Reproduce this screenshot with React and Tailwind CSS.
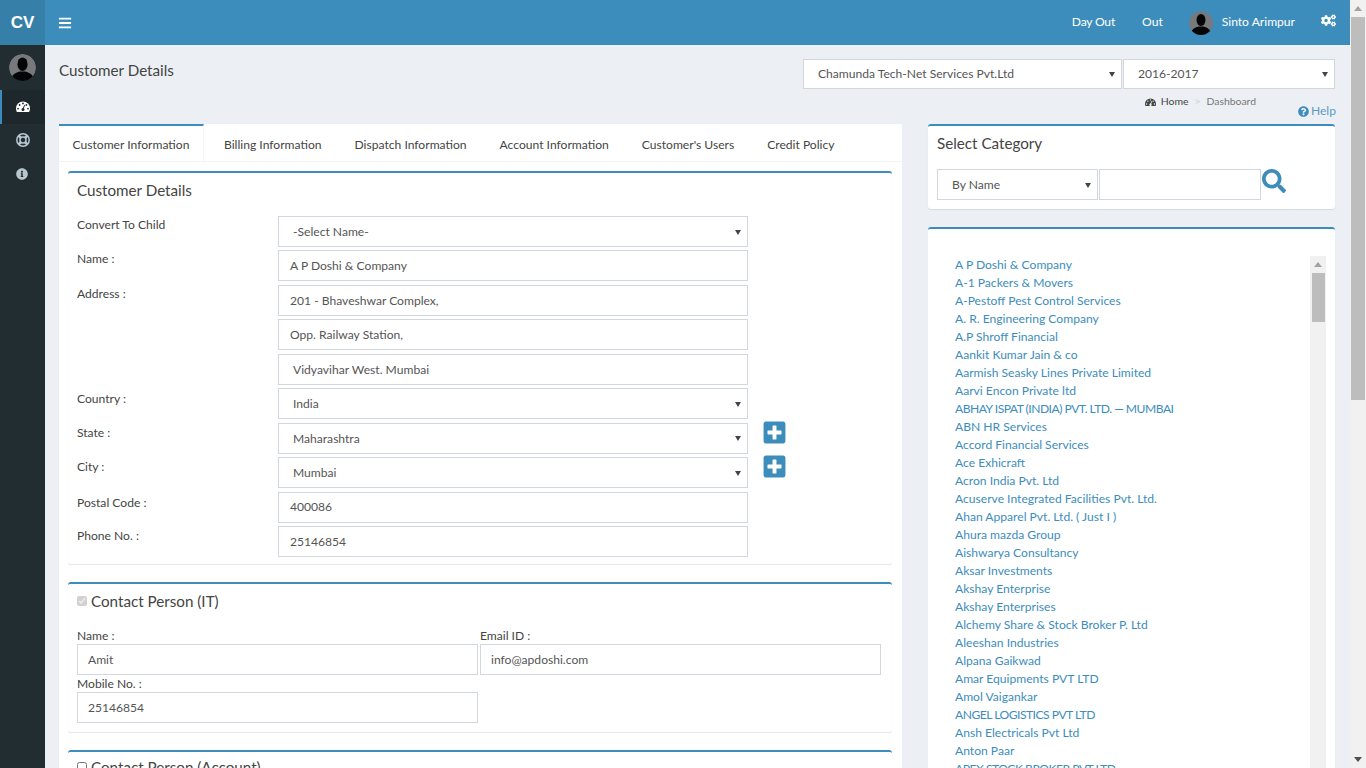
import { FaBars, FaInfoCircle, FaCogs, FaQuestionCircle, FaSearch, FaPlusSquare } from 'react-icons/fa';

const customers = [
  'A P Doshi & Company', 'A-1 Packers & Movers', 'A-Pestoff Pest Control Services', 'A. R. Engineering Company',
  'A.P Shroff Financial', 'Aankit Kumar Jain & co', 'Aarmish Seasky Lines Private Limited', 'Aarvi Encon Private ltd',
  'ABHAY ISPAT (INDIA) PVT. LTD. — MUMBAI', 'ABN HR Services', 'Accord Financial Services', 'Ace Exhicraft',
  'Acron India Pvt. Ltd', 'Acuserve Integrated Facilities Pvt. Ltd.', 'Ahan Apparel Pvt. Ltd. ( Just I )', 'Ahura mazda Group',
  'Aishwarya Consultancy', 'Aksar Investments', 'Akshay Enterprise', 'Akshay Enterprises',
  'Alchemy Share & Stock Broker P. Ltd', 'Aleeshan Industries', 'Alpana Gaikwad', 'Amar Equipments PVT LTD',
  'Amol Vaigankar', 'ANGEL LOGISTICS PVT LTD', 'Ansh Electricals Pvt Ltd', 'Anton Paar', 'APEX STOCK BROKER PVT LTD',
];

const tabs = ['Billing Information', 'Dispatch Information', 'Account Information', "Customer's Users", 'Credit Policy'];

function Avatar({ size }) {
  return (
    <svg width={size} height={size} viewBox="0 0 40 40" className="shrink-0 rounded-full">
      <circle cx="20" cy="20" r="20" fill="#77797c" />
      <ellipse cx="20" cy="15" rx="7.5" ry="10" fill="#050505" />
      <path d="M3 40c0-9 6-12 13-14h8c7 2 13 5 13 14z" fill="#050505" />
    </svg>
  );
}

function Gauge({ width, dots }) {
  return (
    <svg width={width} viewBox="0 0 14 11" fill="currentColor">
      <path d="M0 7.5a7 7 0 1 1 14 0c0 1.3-.3 2.5-.9 3.5H.9C.3 10 0 8.8 0 7.5z" />
      <g fill={dots}>
        <circle cx="2" cy="7.6" r="0.9" />
        <circle cx="3.6" cy="4" r="0.9" />
        <circle cx="7" cy="2.4" r="0.9" />
        <circle cx="10.4" cy="4" r="0.9" />
        <circle cx="12" cy="7.6" r="0.9" />
        <circle cx="7" cy="8.6" r="1.5" />
      </g>
      <path d="M6.4 8.4 8.2 3.8l.8.3-1.6 4.7z" fill={dots} />
    </svg>
  );
}

function LifeRing() {
  return (
    <svg width="14" height="14" viewBox="0 0 14 14" fill="none" stroke="currentColor">
      <circle cx="7" cy="7" r="6.2" strokeWidth="1.5" />
      <circle cx="7" cy="7" r="3" strokeWidth="1.5" />
      <path d="M2.6 2.6 4.9 4.9M11.4 2.6 9.1 4.9M2.6 11.4 4.9 9.1M11.4 11.4 9.1 9.1" strokeWidth="2.6" />
    </svg>
  );
}

function Field({ value, className = 'px-[11px]' }) {
  return (
    <div className={`flex h-[31px] items-center border border-[#d2d6de] bg-white pt-px text-[12.1px] text-[#555] ${className}`}>
      {value}
    </div>
  );
}

function Select({ value, className = 'h-[31px] pt-px' }) {
  return (
    <div className={`flex items-center justify-between border border-[#d2d6de] bg-white pl-[14px] pr-[6px] text-[12.1px] text-[#555] ${className}`}>
      <span>{value}</span>
      <span className="h-0 w-0 border-x-[3px] border-t-[5px] border-x-transparent border-t-[#444]" />
    </div>
  );
}

function Row({ label, children, labelClass = '' }) {
  return (
    <div className="flex">
      <div className={`w-[201px] shrink-0 text-[12.1px] leading-[18px] text-[#444] ${labelClass}`}>{label}</div>
      <div className="w-[470px]">{children}</div>
    </div>
  );
}

function ScrollUp() {
  return <div className="h-0 w-0 border-x-[4px] border-b-[5px] border-x-transparent border-b-[#a3a3a3]" />;
}

export default function App() {
  return (
    <div className="flex h-[768px] w-[1366px] overflow-hidden bg-[#ecf0f5] font-['Lato',sans-serif] text-[#444]">
      <div className="flex min-w-0 flex-1 flex-col">
        <header className="flex h-[45px] shrink-0 items-center bg-[#3c8dbc] text-white">
          <div className="flex h-full w-[45px] items-center justify-center bg-[#367fa9] font-['Liberation_Sans',sans-serif] text-[17px] font-bold">CV</div>
          <FaBars size={14} className="ml-[13px]" />
          <div className="ml-auto flex h-full items-center text-[12.1px]">
            <span className="mr-[27px] tracking-[-0.2px]">Day Out</span>
            <span className="mr-[26px]">Out</span>
            <Avatar size={24} />
            <span className="ml-[9px] mr-[26px]">Sinto Arimpur</span>
            <FaCogs size={15} className="mb-[5px] mr-[14px]" />
          </div>
        </header>

        <div className="flex min-h-0 flex-1">
          <aside className="flex w-[45px] shrink-0 flex-col bg-[#222d32]">
            <div className="flex h-[45px] items-center justify-center">
              <Avatar size={27} />
            </div>
            <div className="flex h-[34px] items-center justify-center border-l-2 border-[#3c8dbc] bg-[#1e282c] pb-[2px] pr-[2px] text-white">
              <Gauge width={14} dots="#1e282c" />
            </div>
            <div className="flex h-[33px] items-center justify-center pb-[2px] text-[#b8c7ce]">
              <LifeRing />
            </div>
            <div className="flex h-[33px] items-center justify-center pr-px text-[#b8c7ce]">
              <FaInfoCircle size={12} />
            </div>
          </aside>

          <main className="min-w-0 flex-1 overflow-hidden pl-[14px] pr-[15px]">
            <div className="flex h-[79px] items-start justify-between pt-[14px]">
              <h1 className="text-[15.2px] leading-[22px] text-[#444]">Customer Details</h1>
              <div className="flex flex-col items-end">
                <div className="flex gap-px">
                  <Select value="Chamunda Tech-Net Services Pvt.Ltd" className="h-[30px] w-[319px]" />
                  <Select value="2016-2017" className="h-[30px] w-[212px]" />
                </div>
                <div className="mr-[79px] mt-[7px] flex h-[12px] items-center text-[10.4px] text-[#444]">
                  <Gauge width={11} dots="#ecf0f5" />
                  <span className="ml-[5px]">Home</span>
                  <span className="mx-[6px] text-[#ccc]">&gt;</span>
                  <span className="text-[#777]">Dashboard</span>
                </div>
                <div className="-mr-px -mt-[3px] flex h-[12px] items-center text-[12.1px] text-[#5b9bc4]">
                  <FaQuestionCircle size={11} className="mr-[2px] text-[#3c8dbc]" />
                  Help
                </div>
              </div>
            </div>

            <div className="flex gap-[26px]">
              <div className="w-[843px] shrink-0">
                <div className="bg-white">
                  <div className="flex h-[38px] items-stretch border-b border-[#f4f4f4] text-[12.1px]">
                    <div className="flex w-[145px] items-center justify-center border-r border-t-[2px] border-r-[#f4f4f4] border-t-[#3c8dbc] pt-[3px] text-[#444]">Customer Information</div>
                    <div className="ml-[3.5px] flex">
                      {tabs.map((t) => (
                        <div key={t} className="flex items-center px-[16.5px] pt-[6px] text-[#444]">{t}</div>
                      ))}
                    </div>
                  </div>
                  <div className="pl-[9px] pr-[10px] pt-[9px]">
                    <section className="h-[393px] rounded-[3px] border-t-[2px] border-[#3c8dbc] bg-white px-[9px] shadow-[0_1px_1px_rgba(0,0,0,0.1)]">
                      <h2 className="pt-[6px] text-[15.2px] leading-[22px] text-[#444]">Customer Details</h2>
                      <div className="mt-[15px] flex flex-col gap-[3.45px]">
                        <Row label="Convert To Child"><Select value="-Select Name-" /></Row>
                        <Row label="Name :"><Field value="A P Doshi & Company" /></Row>
                        <Row label="Address :"><Field value="201 - Bhaveshwar Complex," /></Row>
                        <Row label=""><Field value="Opp. Railway Station," /></Row>
                        <Row label=""><Field value="Vidyavihar West. Mumbai" className="pl-[14px]" /></Row>
                        <Row label="Country :" labelClass="pt-[2px]"><Select value="India" /></Row>
                        <Row label="State :" labelClass="pt-px">
                          <div className="relative">
                            <Select value="Maharashtra" />
                            <FaPlusSquare size={25} className="absolute -right-[39px] top-[-3px] text-[#3c8dbc]" />
                          </div>
                        </Row>
                        <Row label="City :" labelClass="pt-px">
                          <div className="relative">
                            <Select value="Mumbai" />
                            <FaPlusSquare size={25} className="absolute -right-[39px] top-[-3px] text-[#3c8dbc]" />
                          </div>
                        </Row>
                        <Row label="Postal Code :" labelClass="pt-[2px]"><Field value="400086" /></Row>
                        <Row label="Phone No. :" labelClass="pt-px"><Field value="25146854" /></Row>
                      </div>
                    </section>

                    <section className="mt-[18px] h-[150px] rounded-[3px] border-t-[2px] border-[#3c8dbc] bg-white px-[9px] shadow-[0_1px_1px_rgba(0,0,0,0.1)]">
                      <label className="flex items-center pt-[6px] text-[15.2px] leading-[22px] text-[#444]">
                        <input type="checkbox" checked disabled readOnly className="mr-[4px] h-[10px] w-[10px]" />
                        Contact Person (IT)
                      </label>
                      <div className="mt-[17px] grid grid-cols-[401px_401px] gap-x-[2px] text-[12.1px] leading-[14px]">
                        <div>
                          <div className="mb-px">Name :</div>
                          <Field value="Amit" className="px-[10px]" />
                        </div>
                        <div>
                          <div className="mb-px">Email ID :</div>
                          <Field value="info@apdoshi.com" className="px-[10px]" />
                        </div>
                        <div className="mt-[2px]">
                          <div className="mb-px">Mobile No. :</div>
                          <Field value="25146854" className="px-[10px]" />
                        </div>
                      </div>
                    </section>

                    <section className="mt-[18px] rounded-[3px] border-t-[2px] border-[#3c8dbc] bg-white px-[9px] pb-4">
                      <label className="flex items-center pt-[4px] text-[15.2px] leading-[22px] text-[#444]">
                        <input type="checkbox" className="mr-[4px] h-[10px] w-[10px]" />
                        Contact Person (Account)
                      </label>
                    </section>
                  </div>
                </div>
              </div>

              <div className="w-[407px] shrink-0">
                <section className="h-[85px] rounded-[3px] border-t-[2px] border-[#3c8dbc] bg-white px-[9px] shadow-[0_1px_1px_rgba(0,0,0,0.1)]">
                  <h2 className="pt-[6px] text-[15.2px] leading-[22px] text-[#444]">Select Category</h2>
                  <div className="mt-[15px] flex items-start">
                    <Select value="By Name" className="h-[31px] w-[161px] pt-px" />
                    <div className="ml-px h-[31px] w-[162px] border border-[#d2d6de]" />
                    <FaSearch size={24} className="ml-px text-[#3c8dbc]" />
                  </div>
                </section>
                <section className="mt-[18px] h-[600px] rounded-[3px] border-t-[2px] border-[#3c8dbc] bg-white pl-[27px] pr-[9px] pt-[27px]">
                  <div className="flex justify-between">
                    <ul className="text-[12.1px] leading-[18px] text-[#3c8dbc]">
                      {customers.map((c) => (
                        <li key={c} className={c === c.toUpperCase() ? 'whitespace-nowrap tracking-[-0.5px]' : 'whitespace-nowrap'}>{c}</li>
                      ))}
                    </ul>
                    <div className="flex h-[600px] w-[16px] flex-col items-center bg-[#f1f1f1] pt-[6px]">
                      <ScrollUp />
                      <div className="mt-[6px] h-[49px] w-[13px] bg-[#bdbdbd]" />
                    </div>
                  </div>
                </section>
              </div>
            </div>
          </main>
        </div>
      </div>

      <div className="flex w-[16px] shrink-0 flex-col items-center bg-[#f1f1f1] pb-[6px] pt-[6px]">
        <ScrollUp />
        <div className="mt-[6px] h-[383px] w-[14px] bg-[#bdbdbd]" />
        <div className="mt-auto h-0 w-0 border-x-[4px] border-t-[5px] border-x-transparent border-t-[#505050]" />
      </div>
    </div>
  );
}
